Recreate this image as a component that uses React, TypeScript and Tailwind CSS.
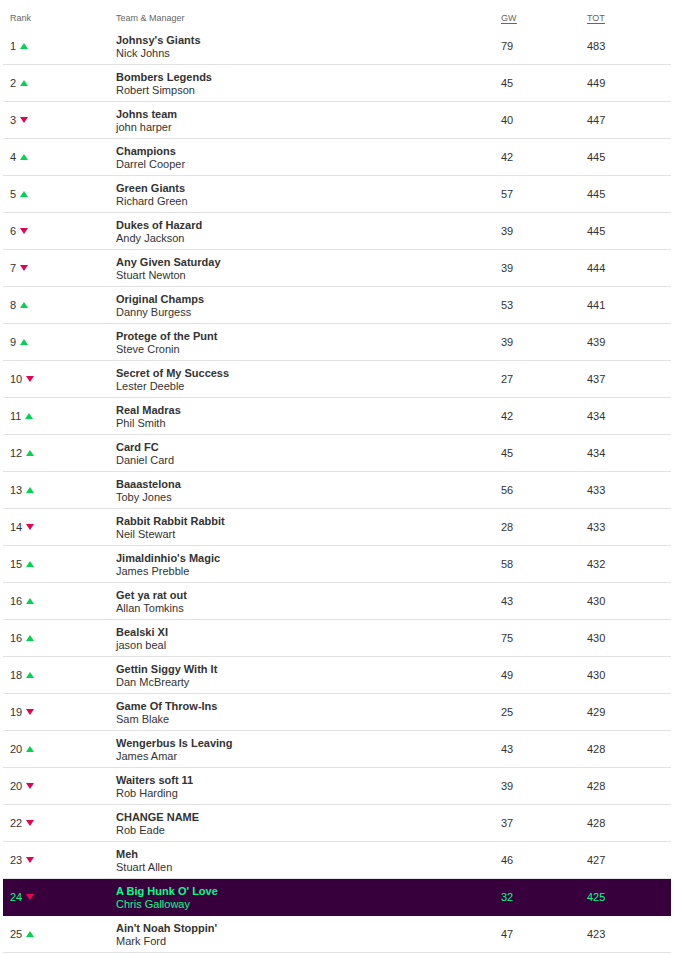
import React from "react";

interface Entry {
  rank: number;
  up: boolean;
  team: string;
  manager: string;
  gw: number;
  tot: number;
  me?: boolean;
}

const entries: Entry[] = [
  { rank: 1, up: true, team: "Johnsy's Giants", manager: "Nick Johns", gw: 79, tot: 483 },
  { rank: 2, up: true, team: "Bombers Legends", manager: "Robert Simpson", gw: 45, tot: 449 },
  { rank: 3, up: false, team: "Johns team", manager: "john harper", gw: 40, tot: 447 },
  { rank: 4, up: true, team: "Champions", manager: "Darrel Cooper", gw: 42, tot: 445 },
  { rank: 5, up: true, team: "Green Giants", manager: "Richard Green", gw: 57, tot: 445 },
  { rank: 6, up: false, team: "Dukes of Hazard", manager: "Andy Jackson", gw: 39, tot: 445 },
  { rank: 7, up: false, team: "Any Given Saturday", manager: "Stuart Newton", gw: 39, tot: 444 },
  { rank: 8, up: true, team: "Original Champs", manager: "Danny Burgess", gw: 53, tot: 441 },
  { rank: 9, up: true, team: "Protege of the Punt", manager: "Steve Cronin", gw: 39, tot: 439 },
  { rank: 10, up: false, team: "Secret of My Success", manager: "Lester Deeble", gw: 27, tot: 437 },
  { rank: 11, up: true, team: "Real Madras", manager: "Phil Smith", gw: 42, tot: 434 },
  { rank: 12, up: true, team: "Card FC", manager: "Daniel Card", gw: 45, tot: 434 },
  { rank: 13, up: true, team: "Baaastelona", manager: "Toby Jones", gw: 56, tot: 433 },
  { rank: 14, up: false, team: "Rabbit Rabbit Rabbit", manager: "Neil Stewart", gw: 28, tot: 433 },
  { rank: 15, up: true, team: "Jimaldinhio's Magic", manager: "James Prebble", gw: 58, tot: 432 },
  { rank: 16, up: true, team: "Get ya rat out", manager: "Allan Tomkins", gw: 43, tot: 430 },
  { rank: 16, up: true, team: "Bealski XI", manager: "jason beal", gw: 75, tot: 430 },
  { rank: 18, up: true, team: "Gettin Siggy With It", manager: "Dan McBrearty", gw: 49, tot: 430 },
  { rank: 19, up: false, team: "Game Of Throw-Ins", manager: "Sam Blake", gw: 25, tot: 429 },
  { rank: 20, up: true, team: "Wengerbus Is Leaving", manager: "James Amar", gw: 43, tot: 428 },
  { rank: 20, up: false, team: "Waiters soft 11", manager: "Rob Harding", gw: 39, tot: 428 },
  { rank: 22, up: false, team: "CHANGE NAME", manager: "Rob Eade", gw: 37, tot: 428 },
  { rank: 23, up: false, team: "Meh", manager: "Stuart Allen", gw: 46, tot: 427 },
  { rank: 24, up: false, team: "A Big Hunk O' Love", manager: "Chris Galloway", gw: 32, tot: 425, me: true },
  { rank: 25, up: true, team: "Ain't Noah Stoppin'", manager: "Mark Ford", gw: 47, tot: 423 },
];

function Movement({ up }: { up: boolean }) {
  return (
    <svg width="8" height="6" viewBox="0 0 8 6" className="ml-[4px]">
      {up ? (
        <polygon points="4,0 8,6 0,6" fill="#01d54f" />
      ) : (
        <polygon points="0,0 8,0 4,6" fill="#e90052" />
      )}
    </svg>
  );
}

export default function App() {
  return (
    <div
      className="w-[674px] bg-white px-[3px]"
      style={{ fontFamily: "'Liberation Sans', Arial, sans-serif" }}
    >
      {/* header */}
      <div className="flex h-[28px] items-start pt-[12px] text-[9px] text-[#666]">
        <div className="w-[113px] pl-[7px]">Rank</div>
        <div className="flex-1">Team &amp; Manager</div>
        <div className="w-[86px]">
          <abbr className="no-underline border-b border-[#666]" title="Gameweek">GW</abbr>
        </div>
        <div className="w-[84px]">
          <abbr className="no-underline border-b border-[#666]" title="Total">TOT</abbr>
        </div>
      </div>
      {entries.map((e, i) => (
        <div
          key={i}
          className={
            "flex h-[37px] items-center border-b text-[11px] " +
            (e.me ? "bg-[#37003c] border-[#37003c] text-[#00ff87]" : "border-[#e2e2e2] text-[#333]")
          }
        >
          <div className="flex w-[113px] items-center pl-[7px]">
            <span>{e.rank}</span>
            <Movement up={e.up} />
          </div>
          <div className="flex flex-1 flex-col pt-[2px] leading-[13px]">
            <span className="font-bold">{e.team}</span>
            <span>{e.manager}</span>
          </div>
          <div className="w-[86px]">{e.gw}</div>
          <div className="w-[84px]">{e.tot}</div>
        </div>
      ))}
    </div>
  );
}
